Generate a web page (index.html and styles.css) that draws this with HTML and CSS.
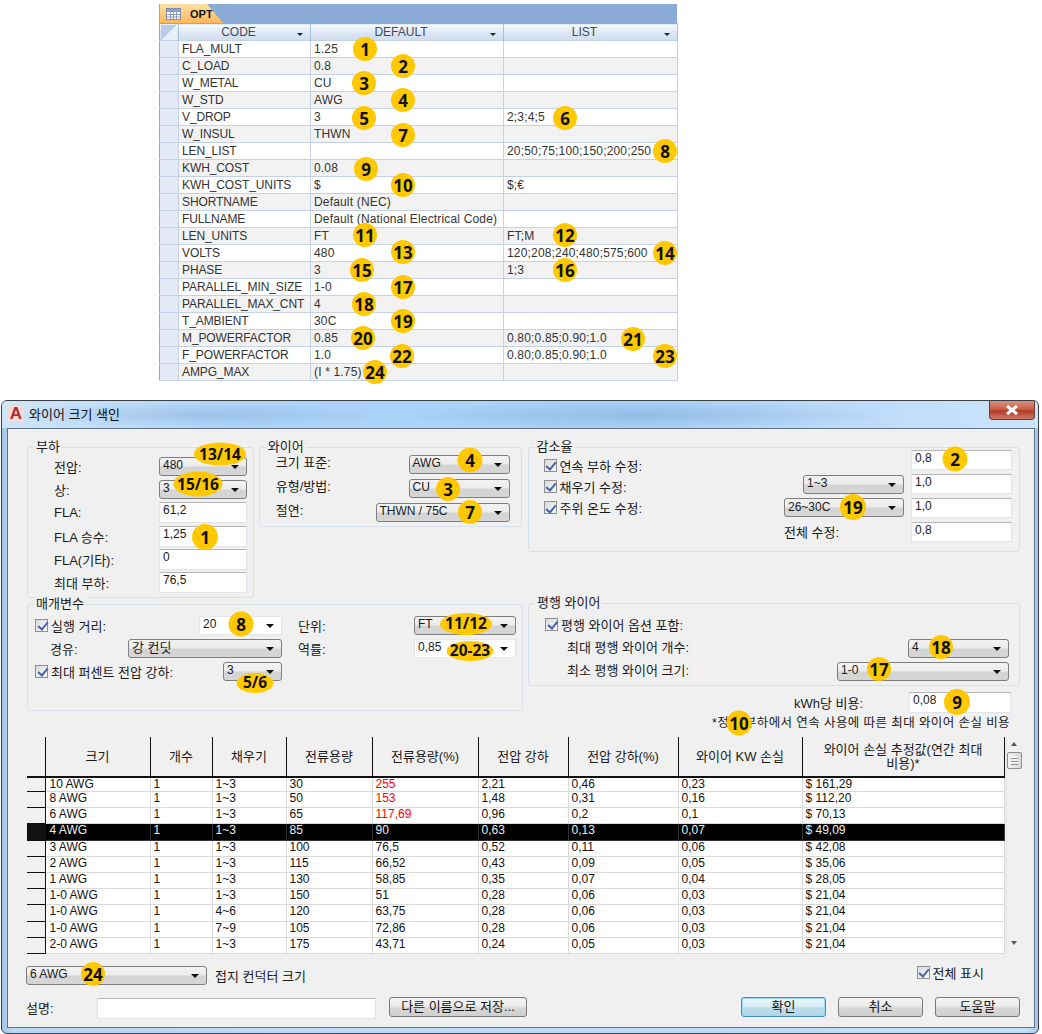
FILE: index.html
```html
<!DOCTYPE html>
<html lang="ko">
<head>
<meta charset="utf-8">
<title>OPT</title>
<link rel="stylesheet" href="styles.css">
</head>
<body>
<div class="page">
  <section class="access">
    <div class="tabbar">
      <div class="tab">
        <svg class="tab-icon" width="15" height="12" viewBox="0 0 15 12"><rect x=".5" y=".5" width="14" height="11" fill="#fff" stroke="#7d8db0"/><path d="M.5 3.5h14M.5 6.5h14M.5 9h14M4.5 .5v11M7.5 .5v11M10.5 .5v11" stroke="#8c9cc0" fill="none"/><rect x="1" y="1" width="13" height="2" fill="#8f9fc6"/></svg>
        <span>OPT</span>
      </div>
    </div>
    <table class="dt">
      <colgroup><col class="dt-sel"><col class="dt-code"><col class="dt-def"><col class="dt-list"></colgroup>
      <thead>
        <tr><th class="corner"><span class="corner-tri"></span></th><th>CODE<i class="sort"></i></th><th>DEFAULT<i class="sort"></i></th><th>LIST<i class="sort"></i></th></tr>
      </thead>
      <tbody>
        <tr><td></td><td>FLA_MULT</td><td>1.25</td><td></td></tr>
        <tr><td></td><td>C_LOAD</td><td>0.8</td><td></td></tr>
        <tr><td></td><td>W_METAL</td><td>CU</td><td></td></tr>
        <tr><td></td><td>W_STD</td><td>AWG</td><td></td></tr>
        <tr><td></td><td>V_DROP</td><td>3</td><td>2;3;4;5</td></tr>
        <tr><td></td><td>W_INSUL</td><td>THWN</td><td></td></tr>
        <tr><td></td><td>LEN_LIST</td><td></td><td>20;50;75;100;150;200;250</td></tr>
        <tr><td></td><td>KWH_COST</td><td>0.08</td><td></td></tr>
        <tr><td></td><td>KWH_COST_UNITS</td><td>$</td><td>$;€</td></tr>
        <tr><td></td><td>SHORTNAME</td><td>Default (NEC)</td><td></td></tr>
        <tr><td></td><td>FULLNAME</td><td>Default (National Electrical Code)</td><td></td></tr>
        <tr><td></td><td>LEN_UNITS</td><td>FT</td><td>FT;M</td></tr>
        <tr><td></td><td>VOLTS</td><td>480</td><td>120;208;240;480;575;600</td></tr>
        <tr><td></td><td>PHASE</td><td>3</td><td>1;3</td></tr>
        <tr><td></td><td>PARALLEL_MIN_SIZE</td><td>1-0</td><td></td></tr>
        <tr><td></td><td>PARALLEL_MAX_CNT</td><td>4</td><td></td></tr>
        <tr><td></td><td>T_AMBIENT</td><td>30C</td><td></td></tr>
        <tr><td></td><td>M_POWERFACTOR</td><td>0.85</td><td>0.80;0.85;0.90;1.0</td></tr>
        <tr><td></td><td>F_POWERFACTOR</td><td>1.0</td><td>0.80;0.85;0.90;1.0</td></tr>
        <tr><td></td><td>AMPG_MAX</td><td>(I * 1.75)</td><td></td></tr>
      </tbody>
    </table>
  </section>

  <section class="window">
    <header class="titlebar">
      <span class="app-icon">A</span>
      <span class="win-title">와이어 크기 색인</span>
      <button class="close" type="button">
        <svg width="14" height="10" viewBox="0 0 14 10"><path d="M2 1l10 8M12 1L2 9" stroke="#fff" stroke-width="3" fill="none"/></svg>
      </button>
    </header>
    <div class="client">
      <div class="row-top">
        <div class="group g-load">
          <span class="legend">부하</span>
          <div class="form-load">
            <label>전압:</label><div class="combo"><span>480</span></div>
            <label>상:</label><div class="combo"><span>3</span></div>
            <label>FLA:</label><div class="input">61,2</div>
            <label>FLA 승수:</label><div class="input">1,25</div>
            <label>FLA(기타):</label><div class="input">0</div>
            <label>최대 부하:</label><div class="input">76,5</div>
          </div>
        </div>
        <div class="group g-wire">
          <span class="legend">와이어</span>
          <div class="form-wire">
            <label>크기 표준:</label><div class="combo w101"><span>AWG</span></div>
            <label>유형/방법:</label><div class="combo w101"><span>CU</span></div>
            <label>절연:</label><div class="combo w134"><span>THWN / 75C</span></div>
          </div>
        </div>
        <div class="group g-derate">
          <span class="legend">감소율</span>
          <div class="form-derate">
            <label class="check"><i class="cb"></i>연속 부하 수정:</label><span></span><div class="input">0,8</div>
            <label class="check"><i class="cb"></i>채우기 수정:</label><div class="combo w101"><span>1~3</span></div><div class="input">1,0</div>
            <label class="check"><i class="cb"></i>주위 온도 수정:</label><div class="combo w120"><span>26~30C</span></div><div class="input">1,0</div>
            <span></span><label>전체 수정:</label><div class="input">0,8</div>
          </div>
        </div>
      </div>

      <div class="row-mid">
        <div class="group g-param">
          <span class="legend">매개변수</span>
          <div class="form-param">
            <div class="pair"><label class="check"><i class="cb"></i>실행 거리:</label><div class="combo edit w83"><span>20</span></div></div>
            <label>단위:</label><div class="combo"><span>FT</span></div>
            <div class="pair"><label class="indent">경유:</label><div class="combo w154"><span>강 컨딧</span></div></div>
            <label>역률:</label><div class="combo edit"><span>0,85</span></div>
            <div class="pair"><label class="check"><i class="cb"></i>최대 퍼센트 전압 강하:</label><div class="combo w59"><span>3</span></div></div>
          </div>
        </div>
        <div class="mid-right">
          <div class="group g-par">
            <span class="legend">평행 와이어</span>
            <label class="check par-check"><i class="cb"></i>평행 와이어 옵션 포함:</label>
            <div class="form-par">
              <label>최대 평행 와이어 개수:</label><div class="combo w101"><span>4</span></div>
              <label>최소 평행 와이어 크기:</label><div class="combo w172"><span>1-0</span></div>
            </div>
          </div>
          <div class="kwh"><label>kWh당 비용:</label><div class="input">0,08</div></div>
          <p class="note">*정격 부하에서 연속 사용에 따른 최대 와이어 손실 비용</p>
        </div>
      </div>

      <div class="grid-wrap">
        <table class="res">
          <colgroup><col class="c0"><col class="c1"><col class="c2"><col class="c3"><col class="c4"><col class="c5"><col class="c6"><col class="c7"><col class="c8"><col class="c9"></colgroup>
          <thead>
            <tr><th></th><th>크기</th><th>개수</th><th>채우기</th><th>전류용량</th><th>전류용량(%)</th><th>전압 강하</th><th>전압 강하(%)</th><th>와이어 KW 손실</th><th>와이어 손실 추정값(연간 최대 비용)*</th></tr>
          </thead>
          <tbody>
            <tr class="first"><th></th><td>10 AWG</td><td>1</td><td>1~3</td><td>30</td><td class="red">255</td><td>2,21</td><td>0,46</td><td>0,23</td><td>$ 161,29</td></tr>
            <tr><th></th><td>8 AWG</td><td>1</td><td>1~3</td><td>50</td><td class="red">153</td><td>1,48</td><td>0,31</td><td>0,16</td><td>$ 112,20</td></tr>
            <tr><th></th><td>6 AWG</td><td>1</td><td>1~3</td><td>65</td><td class="red">117,69</td><td>0,96</td><td>0,2</td><td>0,1</td><td>$ 70,13</td></tr>
            <tr class="sel"><th></th><td>4 AWG</td><td>1</td><td>1~3</td><td>85</td><td>90</td><td>0,63</td><td>0,13</td><td>0,07</td><td>$ 49,09</td></tr>
            <tr><th></th><td>3 AWG</td><td>1</td><td>1~3</td><td>100</td><td>76,5</td><td>0,52</td><td>0,11</td><td>0,06</td><td>$ 42,08</td></tr>
            <tr><th></th><td>2 AWG</td><td>1</td><td>1~3</td><td>115</td><td>66,52</td><td>0,43</td><td>0,09</td><td>0,05</td><td>$ 35,06</td></tr>
            <tr><th></th><td>1 AWG</td><td>1</td><td>1~3</td><td>130</td><td>58,85</td><td>0,35</td><td>0,07</td><td>0,04</td><td>$ 28,05</td></tr>
            <tr><th></th><td>1-0 AWG</td><td>1</td><td>1~3</td><td>150</td><td>51</td><td>0,28</td><td>0,06</td><td>0,03</td><td>$ 21,04</td></tr>
            <tr><th></th><td>1-0 AWG</td><td>1</td><td>4~6</td><td>120</td><td>63,75</td><td>0,28</td><td>0,06</td><td>0,03</td><td>$ 21,04</td></tr>
            <tr><th></th><td>1-0 AWG</td><td>1</td><td>7~9</td><td>105</td><td>72,86</td><td>0,28</td><td>0,06</td><td>0,03</td><td>$ 21,04</td></tr>
            <tr><th></th><td>2-0 AWG</td><td>1</td><td>1~3</td><td>175</td><td>43,71</td><td>0,24</td><td>0,05</td><td>0,03</td><td>$ 21,04</td></tr>
          </tbody>
        </table>
        <div class="scroll">
          <i class="arrow-up"></i>
          <div class="thumb"></div>
          <i class="arrow-down"></i>
        </div>
      </div>

      <div class="row-ground">
        <div class="combo w181"><span>6 AWG</span></div>
        <label>접지 컨덕터 크기</label>
        <label class="check show-all"><i class="cb"></i>전체 표시</label>
      </div>

      <div class="row-foot">
        <label class="desc-label">설명:</label>
        <div class="input desc"></div>
        <button class="btn save" type="button">다른 이름으로 저장...</button>
        <div class="foot-actions">
          <button class="btn primary" type="button">확인</button>
          <button class="btn" type="button">취소</button>
          <button class="btn" type="button">도움말</button>
        </div>
      </div>
    </div>
  </section>

  <span class="badge t1">1</span><span class="badge t2">2</span><span class="badge t3">3</span><span class="badge t4">4</span><span class="badge t5">5</span><span class="badge t6">6</span><span class="badge t7">7</span><span class="badge t8">8</span><span class="badge t9">9</span><span class="badge t10">10</span><span class="badge t11">11</span><span class="badge t12">12</span><span class="badge t13">13</span><span class="badge t14">14</span><span class="badge t15">15</span><span class="badge t16">16</span><span class="badge t17">17</span><span class="badge t18">18</span><span class="badge t19">19</span><span class="badge t20">20</span><span class="badge t21">21</span><span class="badge t22">22</span><span class="badge t23">23</span><span class="badge t24">24</span>

  <span class="badge oval d13">13/14</span><span class="badge oval d15">15/16</span><span class="badge d1">1</span><span class="badge d4">4</span><span class="badge d3">3</span><span class="badge d7">7</span><span class="badge d2">2</span><span class="badge d19">19</span><span class="badge d8">8</span><span class="badge oval d11">11/12</span><span class="badge oval d20">20-23</span><span class="badge oval d5">5/6</span><span class="badge d18">18</span><span class="badge d17">17</span><span class="badge d9">9</span><span class="badge d10">10</span><span class="badge d24">24</span>
</div>
</body>
</html>
```
FILE: styles.css
```css
* { box-sizing: border-box; }
html, body { margin: 0; padding: 0; background: #fff; }
body { font: 12px "Liberation Sans", "Noto Sans CJK KR", sans-serif; color: #1a1a1a; }
label { white-space: nowrap; font-size: 13px; }
.page { position: relative; width: 1042px; height: 1034px; overflow: hidden; display: flex; flex-direction: column; }

/* Access datasheet */
.access { width: 518px; height: 376px; margin: 4px 0 0 159px; }
.tabbar { height: 19px; background: #8aabd6; }
.tab { width: 63px; height: 19px; margin-left: 1px; display: flex; align-items: center; gap: 9px; padding-left: 6px; font-weight: 700; font-size: 11px; color: #111; background: linear-gradient(#fde0a4, #fbb858); clip-path: polygon(0 0, 47px 0, 100% 100%, 0 100%); }
.tab-icon { flex: none; }
.dt { width: 518px; border-collapse: collapse; table-layout: fixed; border-left: 1px solid #8aabd6; border-right: 1px solid #c5d2e6; }
.dt-sel { width: 19px; }
.dt-code { width: 132px; }
.dt-def { width: 193px; }
.dt-list { width: 174px; }
.dt th { height: 17px; padding: 0 12px 0 0; font-weight: 400; font-size: 12px; color: #3c4a5c; text-align: center; position: relative; background: linear-gradient(#f8fafd, #dce6f3 55%, #cfdcec); border-right: 1px solid #a7c0de; border-top: 1px solid #8aabd6; }
.corner-tri { position: absolute; left: 1px; top: 1px; width: 16px; height: 15px; background: linear-gradient(135deg, #b8cdea 50%, #e9eef6 50%); }
.sort { position: absolute; right: 7px; top: 9px; width: 0; height: 0; border: 3px solid transparent; border-top: 3px solid #222; border-bottom: 0; }
.dt td { height: 17px; padding: 0 0 0 3px; font-size: 12px; line-height: 16px; color: #333; letter-spacing: .17px; border: 1px solid #c5d2e6; border-left: 0; white-space: nowrap; overflow: hidden; }
.dt td:nth-child(2) { letter-spacing: -.1px; }
.dt tbody tr:nth-child(even) td { background: #f2f2f2; }
.dt tbody td:first-child, .dt tbody tr:nth-child(even) td:first-child { background: #e3eaf6; }

/* Window chrome */
.window { width: 1038px; height: 634px; margin: 20px 0 0 1px; border: 1px solid #3a3f45; border-radius: 6px; padding: 0 3px 4px 5px; display: flex; flex-direction: column; background: linear-gradient(90deg, #a6c6e6, #b8d8f6 1%, #c2dff9 99%, #a6c6e6); }
.titlebar { height: 27px; position: relative; display: flex; align-items: center; gap: 5px; padding: 0 0 2px 6px; margin: 0 -3px 0 -5px; background: radial-gradient(ellipse 200px 12px at 200px 14px, rgba(120,160,205,.35), transparent), radial-gradient(ellipse 260px 14px at 640px 14px, rgba(110,150,200,.35), transparent), linear-gradient(90deg, #cfe5f8, #aed4f8 22%, #a9d1f7 62%, #cde4fa); border-radius: 5px 5px 0 0; }
.app-icon { width: 16px; height: 16px; background: #f4dcd6; color: #b22a2e; font: 700 17px/16px "Liberation Sans", sans-serif; text-align: center; }
.win-title { font-size: 13px; color: #111; }
.close { position: absolute; right: 3px; top: 0; width: 46px; height: 19px; padding: 0; border: 1px solid #6e3a34; border-top: 0; border-radius: 0 0 4px 4px; background: linear-gradient(#d98f80, #c9614d 45%, #b23a26 55%, #d07a65); display: flex; align-items: center; justify-content: center; }
.client { height: 600px; background: #f0f0f0; border: 1px solid #5e7187; padding: 18px 14px 0 19px; display: flex; flex-direction: column; }

/* Groups */
.group { position: relative; border: 1px solid #d9dfe6; border-radius: 3px; }
.legend { position: absolute; left: 6px; top: -9px; padding: 0 2px; background: #f0f0f0; font-size: 13px; line-height: 16px; color: #1a1a1a; }
.row-top { display: flex; align-items: flex-start; gap: 5px; }
.g-load { width: 227px; height: 151px; padding: 8px 5px 0 26px; }
.form-load { display: grid; grid-template-columns: 105px 88px; grid-auto-rows: 20px; row-gap: 3.4px; align-items: center; }
.g-wire { width: 263px; height: 80px; padding: 6px 11px 0 16px; }
.form-wire { display: grid; grid-template-columns: 1fr auto; grid-auto-rows: 20px; row-gap: 4px; align-items: center; }
.form-wire .combo { justify-self: end; }
.form-wire label { padding-bottom: 5px; }
.g-derate { width: 493px; height: 105px; margin-left: 1px; padding: 2px 7px 0 15px; }
.form-derate { display: grid; grid-template-columns: 1fr 120px 101px; column-gap: 7px; grid-auto-rows: 20.5px; row-gap: 3.3px; align-items: center; }
.form-derate .combo { justify-self: end; }
.form-derate .input { height: 20px; }
.form-derate .check:nth-child(1) { padding-top: 10px; }
.form-derate .check:nth-child(4) { padding-top: 4px; }

.row-mid { display: flex; align-items: flex-start; gap: 4px; margin-top: 5px; }
.g-param { width: 496px; height: 107px; margin-top: 1px; padding: 10px 6px 0 7px; }
.form-param { display: grid; grid-template-columns: 247px 132px 102px; grid-auto-rows: 20px; row-gap: 3px; align-items: center; }
.form-param > label { padding-left: 16px; }
.form-param > .combo { width: 102px; }
.pair { display: flex; justify-content: space-between; align-items: center; }
.indent { padding-left: 15px; }
.mid-right { width: 493px; margin-left: 1px; display: flex; flex-direction: column; }
.g-par { height: 83px; padding: 12px 10px 0 16px; }
.par-check { height: 16px; }
.form-par { display: grid; grid-template-columns: 1fr auto; grid-auto-rows: 20px; row-gap: 3px; align-items: center; padding-left: 22px; margin-top: 6px; }
.form-par .combo { justify-self: end; }
.form-par label { padding-bottom: 4px; }
.kwh { display: flex; align-items: center; justify-content: flex-end; margin-top: 6px; padding-right: 9px; height: 20px; }
.kwh label { margin-right: 46px; }
.kwh .input { width: 102px; }
.note { margin: 3px 10px 0 0; text-align: right; font-size: 12.5px; line-height: 16px; color: #1a1a1a; letter-spacing: .4px; white-space: nowrap; }

/* Controls */
.combo { height: 19px; border: 1px solid #7e7e7e; border-radius: 3px; background: linear-gradient(#f3f3f3, #ececec 45%, #d4d4d4 55%, #d6d6d6); display: flex; align-items: center; padding: 0 0 1px 3px; position: relative; line-height: 15px; white-space: nowrap; }
.combo::after { content: ""; position: absolute; right: 7px; top: 7px; width: 0; height: 0; border: 4px solid transparent; border-top: 4px solid #111; border-bottom: 0; }
.combo.edit { background: #fff; border-color: #e6e6e6; border-radius: 0; }
.w59 { width: 59px; }
.w83 { width: 83px; }
.w101 { width: 101px; }
.w120 { width: 120px; }
.w134 { width: 134px; }
.w154 { width: 154px; font-size: 13px; }
.w172 { width: 172px; }
.w181 { width: 181px; }
.input { height: 21px; background: #fff; border: 1px solid #e2e3ea; border-top-color: #b5b5b5; padding: 0 3px; line-height: 15px; }
.check { display: flex; align-items: center; gap: 3px; }
.cb { flex: none; width: 13px; height: 13px; border: 1px solid #8e8f8f; background: linear-gradient(135deg, #d8dadd, #fafafa); position: relative; }
.cb::after { content: ""; position: absolute; left: 3.5px; top: .5px; width: 4px; height: 8px; border: solid #4a62a8; border-width: 0 2px 2px 0; transform: rotate(40deg); }

/* Result grid */
.grid-wrap { display: flex; margin-top: 6px; height: 216px; }
.res { width: 977px; height: 216px; border-collapse: collapse; table-layout: fixed; background: #fff; }
.c0 { width: 18px; }
.c1 { width: 105px; }
.c2 { width: 62px; }
.c3 { width: 74px; }
.c4 { width: 86px; }
.c5 { width: 106px; }
.c6 { width: 90px; }
.c7 { width: 110px; }
.c8 { width: 124px; }
.c9 { width: 202px; }
.res thead th { height: 40px; padding: 0 4px; background: #f0f0f0; font-weight: 400; font-size: 13px; line-height: 14px; text-align: center; border-right: 1px solid #111; border-bottom: 2px solid #111; }
.res thead th:last-child { padding: 0 18px; }
.res tbody th { background: #f0f0f0; border-right: 1px solid #111; border-bottom: 1px solid #111; padding: 0; }
.res td { height: 16.2px; padding: 0 3px 3px; line-height: 12px; font-size: 12px; border-right: 1px solid #d9d9d9; border-bottom: 1px solid #d9d9d9; white-space: nowrap; overflow: hidden; color: #111; }
.res td:nth-child(2) { padding-left: 4px; }
.res tr.first td, .res tr.first th { height: 14px; line-height: 13px; padding-top: 0; padding-bottom: 0; }
.res .red { color: #f00; }
.res tr.sel td { background: #000; color: #eee; border-color: #333; }
.res tr.sel th { background: #111; }
.scroll { width: 16px; margin-left: 1px; background: #f0f0f0; border-left: 1px solid #e6e6e6; position: relative; display: flex; flex-direction: column; align-items: center; }
.arrow-up { width: 0; height: 0; margin-top: 5px; border: 3px solid transparent; border-bottom: 4px solid #555; border-top: 0; }
.thumb { width: 15px; height: 17px; margin-top: 6px; border: 1px solid #8f8f8f; border-radius: 2px; background: repeating-linear-gradient(#f4f4f4 0 2px, #8f8f8f 2px 3px) center / 7px 9px no-repeat, linear-gradient(90deg, #f2f2f2, #dadada); }
.arrow-down { width: 0; height: 0; margin-top: auto; margin-bottom: 8px; border: 3px solid transparent; border-top: 4px solid #555; border-bottom: 0; }

/* Footer */
.row-ground { display: flex; align-items: center; gap: 8px; margin: 12px 0 0 -1px; height: 20px; }
.show-all { margin-left: auto; margin-right: 36px; margin-top: -6px; }
.row-foot { display: flex; align-items: flex-start; margin: 12px 0 0 -1px; }
.desc-label { width: 71px; padding-top: 1px; }
.desc { width: 279px; height: 21px; margin-top: 1px; }
.btn { height: 20px; padding: 0; border: 1px solid #7a7a7a; border-radius: 3px; background: linear-gradient(#f4f4f4, #ebebeb 45%, #d8d8d8 55%, #cfcfcf); font: 13px "Liberation Sans", "Noto Sans CJK KR", sans-serif; color: #111; line-height: 16px; }
.save { width: 138px; margin-left: 13px; }
.foot-actions { display: flex; gap: 12px; margin-left: auto; }
.foot-actions .btn { width: 85px; }
.btn.primary { border-color: #3c90c8; box-shadow: inset 0 0 0 1px #9fd8f2; background: linear-gradient(#eaf6fc, #dcedf6 45%, #bcdcec 55%, #b4d8e9); }

/* Callouts */
.badge { position: absolute; transform: translate(-50%, -50%); width: 24px; height: 24px; border-radius: 50%; background: #ffc800; color: #111; display: flex; align-items: center; justify-content: center; font: 700 17px/1 "Open Sans", sans-serif; }
.oval { border-radius: 50%; font-size: 15.5px; }
.t1 { left: 365px; top: 49px; } .t2 { left: 403px; top: 66px; } .t3 { left: 364px; top: 83px; } .t4 { left: 403px; top: 100px; } .t5 { left: 364px; top: 118px; } .t6 { left: 565px; top: 118px; } .t7 { left: 403px; top: 135px; } .t8 { left: 665px; top: 151px; } .t9 { left: 366px; top: 169px; } .t10 { left: 403px; top: 185px; }
.t11 { left: 365px; top: 235px; } .t12 { left: 565px; top: 235px; } .t13 { left: 403px; top: 252px; } .t14 { left: 665px; top: 253px; } .t15 { left: 362px; top: 270px; } .t16 { left: 565px; top: 270px; } .t17 { left: 403px; top: 287px; } .t18 { left: 364px; top: 304px; } .t19 { left: 403px; top: 321px; } .t20 { left: 363px; top: 338px; } .t21 { left: 633px; top: 339px; } .t22 { left: 402px; top: 356px; } .t23 { left: 665px; top: 356px; } .t24 { left: 375px; top: 372px; }
.d13 { left: 220px; top: 454px; width: 52px; height: 23px; } .d15 { left: 198px; top: 484px; width: 49px; height: 25px; } .d1 { left: 205px; top: 537px; width: 26px; height: 26px; } .d4 { left: 470px; top: 460px; width: 25px; height: 25px; } .d3 { left: 448px; top: 489px; } .d7 { left: 470px; top: 512px; } .d2 { left: 955px; top: 459px; width: 25px; height: 25px; } .d19 { left: 853px; top: 507px; width: 26px; height: 26px; } .d8 { left: 241px; top: 624px; width: 25px; height: 25px; }
.d11 { left: 466px; top: 624px; width: 52px; height: 22px; } .d20 { left: 470px; top: 651px; width: 47px; height: 20px; } .d5 { left: 255px; top: 683px; width: 37px; height: 20px; } .d18 { left: 941px; top: 647px; } .d17 { left: 879px; top: 669px; } .d9 { left: 957px; top: 702px; width: 26px; height: 26px; } .d10 { left: 739px; top: 723px; width: 25px; height: 25px; } .d24 { left: 93px; top: 974px; }
```
